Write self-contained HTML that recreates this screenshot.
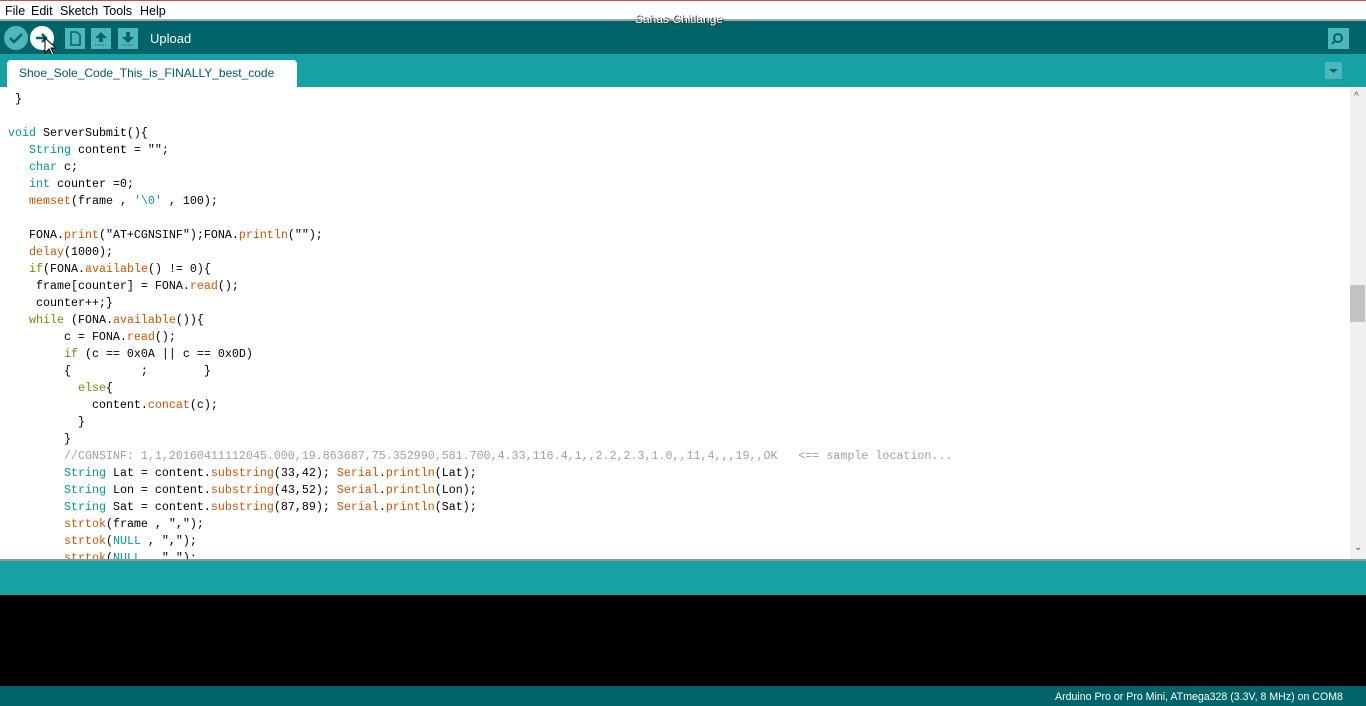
<!DOCTYPE html>
<html><head><meta charset="utf-8"><style>
*{margin:0;padding:0;box-sizing:border-box}
body{width:1366px;height:706px;overflow:hidden;background:#fff;font-family:"Liberation Sans",sans-serif;position:relative}
.abs{position:absolute}
#menu{left:0;top:0;width:1366px;height:21px;background:#fff;border-top:1px solid #c0504d;border-bottom:2px solid #a0a8a8;font-size:12.5px;color:#000}
#menu span{position:absolute;top:3px}
#tool{left:0;top:21px;width:1366px;height:33px;background:#006468}
#tabs{left:0;top:54px;width:1366px;height:33px;background:#17a1a5}
.circ{width:24px;height:24px;border-radius:50%;background:#4db7bb;top:5px}
.sq{width:20px;height:21px;background:#4db7bb;top:7px}
#tab{left:7px;top:6px;width:290px;height:27px;background:#fff;border-radius:4px 4px 0 0;color:#005c5f;font-size:12px;padding:6px 0 0 12px}
pre{position:absolute;left:8px;top:91px;font-family:"Liberation Mono",monospace;font-size:11.67px;line-height:17px;color:#000}
.k{color:#00979c}.f{color:#d35400}.c{color:#728e00}.m{color:#95a5a6}
#sb{left:1350px;top:87px;width:16px;height:472px;background:#f0f0f0}
#band{left:0;top:559px;width:1366px;height:36px;background:#17a1a5;border-top:2px solid #8a9a9a}
#con{left:0;top:595px;width:1366px;height:91px;background:#000}
#stat{left:0;top:686px;width:1366px;height:20px;background:#006468;color:#fff;font-size:10.6px}
</style></head><body>
<div id="menu" class="abs"><span style="left:5px">File</span><span style="left:31px">Edit</span><span style="left:60px">Sketch</span><span style="left:103px">Tools</span><span style="left:140px">Help</span></div>
<div id="tool" class="abs">
 <div class="abs circ" style="left:4px"><svg width="24" height="24"><path d="M6 12l4 4 8-8" stroke="#006468" stroke-width="2.5" fill="none"/></svg></div>
 <div class="abs circ" style="left:30px;background:#fff"><svg width="24" height="24"><path d="M6 12h9M12 8l4 4-4 4" stroke="#006468" stroke-width="2.5" fill="none"/></svg></div>
 <div class="abs sq" style="left:65px"><svg width="20" height="21"><path d="M6 4h6l3 3v10H6z" fill="none" stroke="#006468" stroke-width="1.5"/></svg></div>
 <div class="abs sq" style="left:91px"><svg width="20" height="21"><path d="M10 4l-6 6h4v4h4v-4h4z" fill="#006468"/><path d="M4 17h12" stroke="#006468" stroke-dasharray="1 1"/></svg></div>
 <div class="abs sq" style="left:118px"><svg width="20" height="21"><path d="M10 15l-6-6h4V4h4v5h4z" fill="#006468"/><path d="M4 17h12" stroke="#006468" stroke-dasharray="1 1"/></svg></div>
 <div class="abs" style="left:150px;top:10px;color:#fff;font-size:13px">Upload</div>
 <div class="abs" style="left:635px;top:-9px;color:#fff;font-size:12px;text-shadow:1px 1px 0 #333">Sahas Chitlange</div>
 <div class="abs sq" style="left:1328px;top:7px;width:21px"><svg width="21" height="21"><circle cx="10" cy="10" r="4" fill="none" stroke="#006468" stroke-width="2"/><path d="M7 13l-3 3" stroke="#006468" stroke-width="2"/></svg></div>
 <svg class="abs" style="left:44px;top:16px" width="14" height="20"><path d="M1 1v15l4-4 3 6 2-1-3-6h5z" fill="#fff" stroke="#000"/></svg>
</div>
<div id="tabs" class="abs"><div id="tab" class="abs">Shoe_Sole_Code_This_is_FINALLY_best_code</div>
 <div class="abs" style="left:1325px;top:8px;width:17px;height:17px;background:#4db7bb"><svg width="17" height="17"><path d="M4 7h9l-4.5 4z" fill="#006468"/></svg></div></div>
<pre> }

<span class="k">void</span> ServerSubmit(){
   <span class="k">String</span> content = "";
   <span class="k">char</span> c;
   <span class="k">int</span> counter =0;
   <span class="f">memset</span>(frame , <span class="k">'\0'</span> , 100);

   FONA.<span class="f">print</span>("AT+CGNSINF");FONA.<span class="f">println</span>("");
   <span class="f">delay</span>(1000);
   <span class="c">if</span>(FONA.<span class="f">available</span>() != 0){
    frame[counter] = FONA.<span class="f">read</span>();
    counter++;}
   <span class="c">while</span> (FONA.<span class="f">available</span>()){
        c = FONA.<span class="f">read</span>();
        <span class="c">if</span> (c == 0x0A || c == 0x0D)
        {          ;        }
          <span class="c">else</span>{
            content.<span class="f">concat</span>(c);
          }
        }
        <span class="m">//CGNSINF: 1,1,20160411112045.000,19.863687,75.352990,581.700,4.33,116.4,1,,2.2,2.3,1.0,,11,4,,,19,,OK   &lt;== sample location...</span>
        <span class="k">String</span> Lat = content.<span class="f">substring</span>(33,42); <span class="f">Serial</span>.<span class="f">println</span>(Lat);
        <span class="k">String</span> Lon = content.<span class="f">substring</span>(43,52); <span class="f">Serial</span>.<span class="f">println</span>(Lon);
        <span class="k">String</span> Sat = content.<span class="f">substring</span>(87,89); <span class="f">Serial</span>.<span class="f">println</span>(Sat);
        <span class="f">strtok</span>(frame , ",");
        <span class="f">strtok</span>(<span class="k">NULL</span> , ",");
        <span class="f">strtok</span>(<span class="k">NULL</span> , ",");</pre>
<div id="sb" class="abs"><div class="abs" style="left:0;top:198px;width:15px;height:37px;background:#c2c2c2"></div>
 <div class="abs" style="left:4px;top:4px;color:#555;font-size:10px">&#94;</div>
 <div class="abs" style="left:4px;top:455px;color:#555;font-size:10px">&#8964;</div></div>
<div id="band" class="abs"></div>
<div id="con" class="abs"></div>
<div id="stat" class="abs"><span class="abs" style="left:1055px;top:5px">Arduino Pro or Pro Mini, ATmega328 (3.3V, 8 MHz) on COM8</span></div>
</body></html>
